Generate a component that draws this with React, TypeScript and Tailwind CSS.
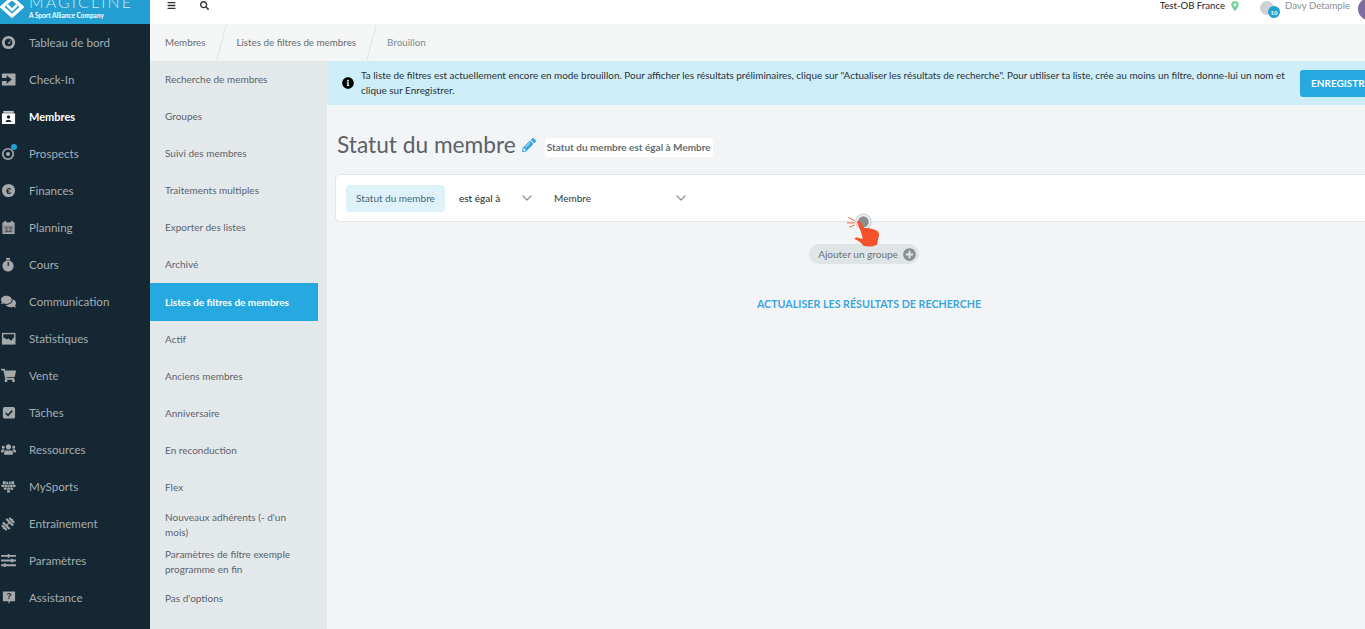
import { FaBars, FaSearch, FaPencilAlt, FaInfoCircle, FaMapMarkerAlt, FaPlusCircle, FaComments, FaShoppingCart, FaUsers, FaDumbbell, FaSlidersH } from 'react-icons/fa';
import { ChevronDown } from 'lucide-react';
import type { ReactNode } from 'react';

const GREY = '#a6a9aa';
const DARK = '#142733';

// Small filled nav glyphs, drawn on a 16 unit box
const Box = ({ children }: { children: ReactNode }) => (
  <svg viewBox="0 0 16 16" className="h-[15px] w-[15px]">
    {children}
  </svg>
);

const NAV: { label: string; icon: ReactNode; active?: boolean }[] = [
  {
    label: 'Tableau de bord',
    icon: (
      <Box>
        <circle cx="8" cy="8" r="7" fill={GREY} />
        <circle cx="8" cy="8" r="4" fill={DARK} />
        <path d="M7 9 L11 5 L9 9.5 Z" fill={GREY} />
      </Box>
    ),
  },
  {
    label: 'Check-In',
    icon: (
      <Box>
        <rect x="1" y="1.5" width="14.5" height="13" rx="1" fill={GREY} />
        <path d="M1 6.5 H6 V3.5 L11.5 8 L6 12.5 V9.5 H1 Z" fill={DARK} />
      </Box>
    ),
  },
  {
    label: 'Membres',
    active: true,
    icon: (
      <Box>
        <path d="M2.5 1 H13.5 V3 H2.5 Z" fill="#c9cdd0" />
        <rect x="1" y="3.5" width="14" height="11.5" rx="1" fill="#fff" />
        <circle cx="8" cy="7.5" r="1.8" fill={DARK} />
        <path d="M4.8 12.8 C4.8 10 11.2 10 11.2 12.8 Z" fill={DARK} />
      </Box>
    ),
  },
  {
    label: 'Prospects',
    icon: (
      <Box>
        <circle cx="7.5" cy="8.5" r="5.6" fill="none" stroke={GREY} strokeWidth="1.8" />
        <circle cx="7.5" cy="8.5" r="2.2" fill={GREY} />
      </Box>
    ),
  },
  {
    label: 'Finances',
    icon: (
      <Box>
        <circle cx="8" cy="8" r="7" fill={GREY} />
        <text x="8" y="11.5" textAnchor="middle" fontSize="10" fontWeight="700" fill={DARK} fontFamily="Liberation Sans, sans-serif">€</text>
      </Box>
    ),
  },
  {
    label: 'Planning',
    icon: (
      <Box>
        <rect x="1.5" y="2.5" width="13" height="12.5" fill={GREY} />
        <rect x="3.5" y="1" width="2" height="3" fill={GREY} />
        <rect x="10.5" y="1" width="2" height="3" fill={GREY} />
        <rect x="2.5" y="5.5" width="11" height="8.5" fill="#8d9396" />
        <text x="8" y="12.6" textAnchor="middle" fontSize="7" fill={DARK} fontFamily="Liberation Sans, sans-serif">12</text>
      </Box>
    ),
  },
  {
    label: 'Cours',
    icon: (
      <Box>
        <circle cx="7.5" cy="9.5" r="6" fill={GREY} />
        <rect x="5.5" y="1" width="4" height="2" fill={GREY} />
        <rect x="7" y="5.5" width="1.4" height="4" fill={DARK} />
      </Box>
    ),
  },
  { label: 'Communication', icon: <FaComments className="h-[15px] w-[15px] text-[#a6a9aa]" /> },
  {
    label: 'Statistiques',
    icon: (
      <Box>
        <rect x="1" y="2" width="14.5" height="12.5" fill={GREY} />
        <path d="M2.5 3.5 H14 V6.5 L11 10.5 L8 8 L5.5 9 L4 7 L2.5 8 Z" fill={DARK} />
      </Box>
    ),
  },
  { label: 'Vente', icon: <FaShoppingCart className="h-[15px] w-[15px] text-[#a6a9aa]" /> },
  {
    label: 'Tâches',
    icon: (
      <Box>
        <rect x="2" y="2" width="13" height="12.5" rx="2" fill={GREY} />
        <path d="M5 8.5 L7.5 11 L12 6" fill="none" stroke={DARK} strokeWidth="1.6" />
      </Box>
    ),
  },
  { label: 'Ressources', icon: <FaUsers className="h-[15px] w-[15px] text-[#a6a9aa]" /> },
  {
    label: 'MySports',
    icon: (
      <Box>
        <path
          d="M2 2.5 h3 v3 h-3 z M5.6 3 h2 v2.5 h-2 z M8.4 3 h2 v2.5 h-2 z M11 2.5 h3 v3 h-3 z M0.5 6 h3 v2.5 h-3 z M4 6 h2.5 v2.5 h-2.5 z M7 6 h2 v2.5 h-2 z M9.5 6 h2.5 v2.5 h-2.5 z M12.5 6 h3 v2.5 h-3 z M3 9 h3 v2.5 h-3 z M6.6 9 h2.8 v2.5 h-2.8 z M10 9 h3 v2.5 h-3 z M6.5 12 h3 v2.5 h-3 z"
          fill={GREY}
        />
      </Box>
    ),
  },
  { label: 'Entraînement', icon: <FaDumbbell className="h-[14px] w-[14px] -rotate-45 text-[#a6a9aa]" /> },
  { label: 'Paramètres', icon: <FaSlidersH className="h-[15px] w-[15px] text-[#a6a9aa]" /> },
  {
    label: 'Assistance',
    icon: (
      <Box>
        <path d="M2 1.5 H15 V12 H10 L8 15 V12 H2 Z" fill={GREY} />
        <text x="8.5" y="10" textAnchor="middle" fontSize="9" fontWeight="700" fill={DARK} fontFamily="Liberation Sans, sans-serif">?</text>
      </Box>
    ),
  },
];

const ACTIVE_SUB = 'Listes de filtres de membres';

const SUB = [
  'Recherche de membres',
  'Groupes',
  'Suivi des membres',
  'Traitements multiples',
  'Exporter des listes',
  'Archivé',
  ACTIVE_SUB,
  'Actif',
  'Anciens membres',
  'Anniversaire',
  'En reconduction',
  'Flex',
  "Nouveaux adhérents (- d'un mois)",
  'Paramètres de filtre exemple programme en fin',
  "Pas d'options",
];

export default function App() {
  return (
    <div className="flex h-[629px] w-[1365px] overflow-hidden bg-[#f3f4f6] font-['Lato',sans-serif] text-[#4b5560]">
      {/* Sidebar */}
      <aside className="w-[150px] shrink-0 bg-[#142733]">
        <div className="flex h-6 items-start overflow-hidden bg-[#239fd1] text-white">
          <svg viewBox="0 0 24 24" className="mt-[-5px] h-[24px] w-[24px] shrink-0" fill="none" stroke="white" strokeWidth="3.4">
            <path d="M12 3 L22 12 L12 21 L2 12 Z" />
            <path d="M7 10 L12 15 L17 10" strokeWidth="2.6" />
          </svg>
          <div className="ml-[5px] mt-[-6px]">
            <div className="text-[16px] font-light leading-[15px] tracking-[2.1px] text-[#cfe9f5]">MAGICLINE</div>
            <div className="mt-[2px] text-[6.5px] font-bold leading-[9px]">A Sport Alliance Company</div>
          </div>
        </div>
        <nav>
          {NAV.map(({ label, icon, active }) => (
            <div key={label} className={`flex h-[37px] items-center ${active ? 'pt-[2px] text-[11px] font-bold text-white' : 'text-[11.6px] text-[#a5adb2]'}`}>
              <span className="relative flex w-[29px] shrink-0 items-center pl-[1px]">
                {icon}
                {label === 'Prospects' && <span className="absolute left-[11px] top-[-2px] h-[6px] w-[6px] rounded-full bg-[#239fd1]" />}
              </span>
              {label}
            </div>
          ))}
        </nav>
      </aside>

      <div className="flex min-w-0 flex-1 flex-col">
        {/* Top bar */}
        <header className="flex h-6 shrink-0 items-start bg-white pt-[1px]">
          <FaBars className="ml-[17px] h-[9px] w-[9px] text-[#333]" />
          <FaSearch className="ml-[24px] h-[9px] w-[9px] text-[#333]" />
          <div className="ml-auto flex items-start">
            <span className="text-[9.6px] leading-[10px] text-[#222]">Test-OB France</span>
            <FaMapMarkerAlt className="ml-[5px] h-[10px] w-[10px] text-[#6fd39a]" />
            <span className="relative ml-[20px] h-[14px] w-[14px] rounded-full bg-[#cfd2d4]">
              <span className="absolute left-[8px] top-[5px] flex h-[12px] w-[12px] items-center justify-center rounded-full bg-[#239fd1] text-[6px] font-bold text-white">10</span>
            </span>
            <span className="ml-[11px] text-[9.6px] leading-[10px] text-[#8a8f94]">Davy Detample</span>
            <span className="ml-[8px] mr-[-15px] mt-[-3px] h-[22px] w-[22px] rounded-full bg-[#7b6b9e]" />
          </div>
        </header>

        {/* Breadcrumb */}
        <div className="flex h-[37px] shrink-0 items-center bg-[#f4f6f6] text-[9.8px] text-[#666c70]">
          <span className="pl-[15px] pr-[16px]">Membres</span>
          <span className="h-[37px] w-px rotate-[15deg] bg-[#dfe3e4]" />
          <span className="pl-[14px] pr-[15px]">Listes de filtres de membres</span>
          <span className="h-[37px] w-px rotate-[15deg] bg-[#dfe3e4]" />
          <span className="pl-[15px] text-[#82888c]">Brouillon</span>
        </div>

        <div className="flex min-h-0 flex-1">
          {/* Sub navigation */}
          <div className="w-[177px] shrink-0 bg-[#e3e8eb] text-[10px] text-[#5b646b]">
            {SUB.map((item) => (
              <div
                key={item}
                className={`flex w-[168px] items-center pl-[15px] pr-[20px] leading-[15px] ${
                  item === ACTIVE_SUB ? 'h-[38px] whitespace-nowrap bg-[#26a9e0] font-bold text-white' : 'h-[37px]'
                }`}
              >
                {item}
              </div>
            ))}
          </div>

          {/* Main */}
          <main className="min-w-0 flex-1">
            <div className="flex h-[44px] items-center bg-[#cdeef8] pl-[15px] text-[9.94px] leading-[15px] text-[#2b3237]">
              <FaInfoCircle className="h-[12px] w-[12px] shrink-0 text-black" />
              <p className="ml-[7px] w-[931px] shrink-0 whitespace-nowrap">
                Ta liste de filtres est actuellement encore en mode brouillon. Pour afficher les résultats préliminaires, clique sur "Actualiser les résultats de recherche". Pour utiliser ta liste, crée au moins un filtre, donne-lui un nom et
                <br />
                clique sur Enregistrer.
              </p>
              <button className="ml-[8px] h-[27px] w-[90px] shrink-0 whitespace-nowrap rounded-[3px] bg-[#26a9e0] pl-[11px] text-left text-[10px] font-bold text-white">
                ENREGISTRER
              </button>
            </div>

            <div className="pl-[8px]">
              <div className="mt-[25px] flex h-[30px] items-center pl-[2px]">
                <h1 className="text-[22.7px] font-normal text-[#5a6268]">Statut du membre</h1>
                <FaPencilAlt className="ml-[6px] h-[14px] w-[14px] text-[#3aa6de]" />
                <span className="ml-[9px] mt-[5px] rounded-[4px] bg-white px-[2px] py-[2px] text-[10px] font-bold text-[#666c72]">Statut du membre est égal à Membre</span>
              </div>

              <div className="mt-[14px] flex h-[48px] w-[1040px] items-center rounded-[5px] border border-[#e4e7ea] bg-white pl-[10px]">
                <span className="flex h-[27px] w-[99px] items-center justify-center rounded-[4px] bg-[#dff1f9] text-[10px] text-[#45677c]">Statut du membre</span>
                <span className="ml-[14px] w-[60px] text-[10px] text-[#222]">est égal à</span>
                <ChevronDown size={16} strokeWidth={1.8} className="text-[#8a9096]" />
                <span className="ml-[19px] w-[119px] text-[10px] text-[#333]">Membre</span>
                <ChevronDown size={16} strokeWidth={1.8} className="text-[#8a9096]" />
              </div>

              <div className="relative mt-[22px] flex w-[1068px] justify-center">
                <svg viewBox="0 0 34 34" className="absolute left-[511px] top-[-32px] h-[37px] w-[37px]">
                  <circle cx="16" cy="9" r="7" fill="#f3f4f6" stroke="#c9cccf" />
                  <circle cx="16" cy="9" r="5" fill="#8a8f92" />
                  <path d="M2 5 L8 8 M1 10 L8 10 M3 14 L8 12" stroke="#f4522b" strokeWidth="0.8" fill="none" />
                  <path d="M10 9 C11 7.5 13 8 13.5 9.5 L17 15 C20 14 24 15.5 28 17 C30 18 31 20 30 23 L28.5 30 C24 32 19 32 16 31 C14 28 11 26 8 25 C8 23 10 23 12.5 24 L15.5 25 L14 19 Z" fill="#f4522b" />
                </svg>
                <span className="mr-[10px] flex h-[20px] items-center gap-[5px] rounded-full bg-[#dfe4e6] pl-[9px] pr-[3px] text-[10px] text-[#6a7176]">
                  Ajouter un groupe
                  <FaPlusCircle className="h-[13px] w-[13px] text-[#888e92]" />
                </span>
              </div>

              <div className="mt-[32px] w-[1068px] text-center text-[10.7px] font-bold text-[#3aa6de]">ACTUALISER LES RÉSULTATS DE RECHERCHE</div>
            </div>
          </main>
        </div>
      </div>
    </div>
  );
}
